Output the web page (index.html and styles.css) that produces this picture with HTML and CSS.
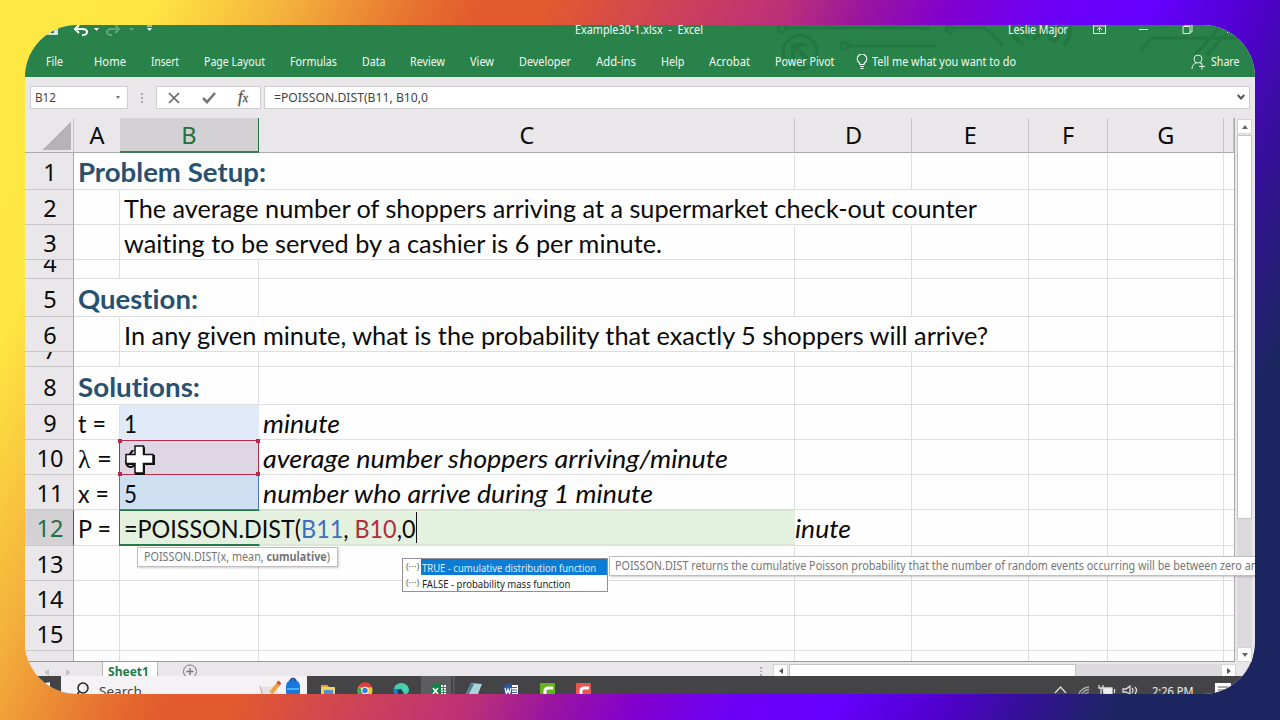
FILE: index.html
```html
<!DOCTYPE html>
<html lang="en">
<head>
<meta charset="utf-8">
<title>Example30-1.xlsx - Excel</title>
<link rel="stylesheet" href="styles.css">
</head>
<body>
<main class="window">
  <header class="ribbon">
    <svg class="circuit" width="480" height="52" viewBox="0 0 480 52" fill="none" stroke="#1f6d3b" stroke-width="2.5">
      <circle cx="7" cy="3" r="4"/><path d="M11 3H140L155 4M172 3h38l18 17M70 21h92"/>
      <circle cx="25" cy="27" r="17" stroke-width="3"/><path d="M32 34 19 21M18 33V20h14" stroke-width="4"/>
      <circle cx="70" cy="21" r="4"/><circle cx="175" cy="4" r="4"/>
      <path d="M238 0q-3 14 11 19M248 0q-2 9 7 13M258 15 270 5l8 12M284 0q4 8-5 17M294 0q4 10-5 20" stroke-width="4"/>
      <path d="M367 25 376 13H470M420 30 447 0M432 30 459 0" stroke-width="3"/>
    </svg>
    <div class="titlebar">
      <svg class="quick" width="120" height="14" viewBox="0 0 120 14" fill="none" stroke="#fff" stroke-width="1.6">
        <path d="M14 0v9h10V0M16 2h7M17 9V5h5v4"/><path d="M42 4h7q5 0 5 3t-5 3M46 0l-4 4 4 4" stroke-width="2"/><path d="m61 3 2.500 3L66 3z" fill="#fff" stroke="none"/>
        <g opacity=".28"><path d="M86 4h-7q-5 0-5 3t5 3M82 0l4 4-4 4" stroke-width="2"/><path d="m96 3 2.500 3L101 3z" fill="#fff" stroke="none"/></g>
        <path d="M114 1h5" stroke-width="1"/><path d="m114 3 2.500 3 2.500-3z" fill="#fff" stroke="none"/>
      </svg>
      <span class="doc" data-w="128">Example30-1.xlsx&nbsp; -&nbsp; Excel</span>
      <span class="user" data-w="60">Leslie Major</span>
      <svg class="winctl" width="145" height="14" viewBox="0 0 145 14" fill="none" stroke="#e4f1e8">
        <path d="M.5 0v8.500h12V0M.5 1h12M6.500 7V2.500M4 5l2.500-2.500L9 5M46 4.500h9M90 1.500h7v7h-7zM92 1.500V0h7v7h-2M134 8l9-9"/>
      </svg>
    </div>
    <nav class="tabs">
      <span class="file" data-w="17">File</span><span data-w="32">Home</span><span data-w="28">Insert</span><span data-w="61">Page Layout</span><span data-w="47">Formulas</span><span data-w="23.500">Data</span><span data-w="35">Review</span><span data-w="24">View</span><span data-w="52">Developer</span><span data-w="40">Add-ins</span><span data-w="23.500">Help</span><span data-w="41">Acrobat</span><span data-w="59.500">Power Pivot</span>
      <svg class="bulb" width="12" height="16" viewBox="0 0 12 16" fill="none" stroke="#fff" stroke-width="1.200"><path d="M4 10.500Q4 9 2.500 8A4.700 4.700 0 1 1 9.500 8Q8 9 8 10.500zM4 12.500h4M4.500 14.500h3"/></svg>
      <span class="tell" data-w="144">Tell me what you want to do</span>
      <span class="share"><svg width="15" height="16" viewBox="0 0 15 16" fill="none" stroke="#e4f1e8"><circle cx="7" cy="5" r="4"/><path d="M1 15q0-5 4.500-6M9 9l2 1M8 12.500h6M11 9.500v6"/></svg><span data-w="28.500">Share</span></span>
    </nav>
  </header>

  <section class="formula">
    <div class="namebox"><span data-w="21">B12</span><i class="caret"></i></div>
    <div class="dots"><i></i><i></i><i></i></div>
    <div class="fxbox">
      <svg width="12" height="12" viewBox="0 0 12 12" fill="none" stroke="#666" stroke-width="1.700"><path d="m1 1 10 10M11 1 1 11"/></svg>
      <svg width="14" height="12" viewBox="0 0 14 12" fill="none" stroke="#777" stroke-width="2.600"><path d="m1 6 4 4 8-9"/></svg>
      <span class="fx">f<small>x</small></span>
    </div>
    <div class="input"><span data-w="154">=POISSON.DIST(B11, B10,0</span><svg width="8" height="7" viewBox="0 0 8 7" fill="none" stroke="#555" stroke-width="2"><path d="m.7 1 3.300 3.500L7.300 1"/></svg></div>
  </section>

  <section class="book">
    <div class="sheet">
      <div class="row head"><b class="corner"></b><b>A</b><b class="on">B</b><b>C</b><b>D</b><b>E</b><b>F</b><b>G</b><b></b></div>
      <div class="row h37"><b>1</b><p class="o title"><span data-w="188">Problem Setup:</span></p><p class="o"></p><p></p><p></p><p></p><p></p><p></p><p></p></div>
      <div class="row"><b>2</b><p></p><p class="o"><span data-w="853">The average number of shoppers arriving at a supermarket check-out counter</span></p><p class="o"></p><p class="o"></p><p></p><p></p><p></p><p></p></div>
      <div class="row"><b>3</b><p></p><p class="o"><span data-w="538">waiting to be served by a cashier is 6 per minute.</span></p><p></p><p></p><p></p><p></p><p></p><p></p></div>
      <div class="row h19"><b><em>4</em></b><p></p><p></p><p></p><p></p><p></p><p></p><p></p><p></p></div>
      <div class="row h38"><b>5</b><p class="o title"><span data-w="120">Question:</span></p><p></p><p></p><p></p><p></p><p></p><p></p><p></p></div>
      <div class="row"><b>6</b><p></p><p class="o"><span data-w="864">In any given minute, what is the probability that exactly 5 shoppers will arrive?</span></p><p class="o"></p><p class="o"></p><p></p><p></p><p></p><p></p></div>
      <div class="row h15"><b><em>7</em></b><p></p><p></p><p></p><p></p><p></p><p></p><p></p><p></p></div>
      <div class="row h38"><b>8</b><p class="o title"><span data-w="122">Solutions:</span></p><p></p><p></p><p></p><p></p><p></p><p></p><p></p></div>
      <div class="row"><b>9</b><p><span data-w="28">t =</span></p><p class="t"><span data-w="13">1</span></p><p class="i"><span data-w="77">minute</span></p><p></p><p></p><p></p><p></p><p></p></div>
      <div class="row"><b>10</b><p><span data-w="34"><span class="lambda">λ</span> =</span></p><p class="mean"><span data-w="13">6</span><i class="k tl"></i><i class="k tr"></i><i class="k bl"></i><i class="k br"></i></p><p class="i"><span data-w="465">average number shoppers arriving/minute</span></p><p></p><p></p><p></p><p></p><p></p></div>
      <div class="row"><b>11</b><p><span data-w="31">x =</span></p><p class="x"><span data-w="13">5</span></p><p class="i"><span data-w="390">number who arrive during 1 minute</span></p><p></p><p></p><p></p><p></p><p></p></div>
      <div class="row h36"><b class="on">12</b><p><span data-w="33">P =</span></p><p class="edit"><span data-w="291.500">=POISSON.DIST(<span class="blue">B11</span>, <span class="red">B10</span>,0</span><i class="ibeam"></i></p><p class="i rest"><span data-w="56">inute</span></p><p></p><p></p><p></p><p></p></div>
      <div class="row"><b>13</b><p></p><p></p><p></p><p></p><p></p><p></p><p></p><p></p></div>
      <div class="row"><b>14</b><p></p><p></p><p></p><p></p><p></p><p></p><p></p><p></p></div>
      <div class="row"><b>15</b><p></p><p></p><p></p><p></p><p></p><p></p><p></p><p></p></div>
      <div class="row h11"><b><em>16</em></b><p></p><p></p><p></p><p></p><p></p><p></p><p></p><p></p></div>
    </div>
    <div class="vscroll"><span class="btn"><i class="up"></i></span><span class="thumb"></span><span class="space"></span><span class="btn"><i class="down"></i></span></div>
  </section>

  <footer class="sheets">
    <span class="arrows"><i class="left"></i><i class="right"></i></span>
    <span class="tab"><span data-w="41">Sheet1</span></span>
    <svg class="plus" width="16" height="15" viewBox="0 0 16 15" fill="none" stroke="#777"><circle cx="8" cy="9.500" r="6.500"/><path d="M8 6v7M4.500 9.500h7" stroke-width="1.400"/></svg>
    <span class="dots2"><i></i><i></i><i></i></span>
    <span class="hbtn"><i class="left"></i></span><span class="hthumb"></span><span class="hspace"></span><span class="hbtn"><i class="right"></i></span>
  </footer>

  <footer class="taskbar">
    <svg class="start" width="36" height="18" viewBox="0 0 36 18"><path d="m12 8 5-.5V18h-5zM18 7.300l7-1V18h-7z" fill="#fff"/></svg>
    <div class="search">
      <svg width="14" height="18" viewBox="0 0 14 18" fill="none" stroke="#222" stroke-width="1.500"><circle cx="7" cy="12" r="5"/><path d="m3.500 15.500-4 5"/></svg>
      <span data-w="43">Search</span>
      <svg class="art" width="44" height="18" viewBox="0 0 44 18"><path d="m1 11 16-1 2 8H3z" fill="#e3e0df"/><path d="m1 10 2 8" stroke="#b9a9a0"/><path d="m12 17 8-10" stroke="#efa043" stroke-width="4"/><path d="m19 8 2-2" stroke="#d94b3e" stroke-width="4"/><rect x="27" y="4" width="14" height="18" rx="6" fill="#1977dd"/><path d="M31 5q3-5 6 0" fill="none" stroke="#164f9c" stroke-width="2"/><path d="M28 13h12" stroke="#44b5ff" stroke-width="2"/></svg>
    </div>
    <svg class="apps" width="290" height="18" viewBox="0 0 290 18">
      <path d="M14 9h6l2 2h6v7H14z" fill="#f6cf61"/><path d="M14 9h6l1 2h-7z" fill="#e5a52b"/><path d="M17 14h9v4h-9z" fill="#4d91c9"/>
      <circle cx="58" cy="14.500" r="7.500" fill="#f0c52e"/><path d="M51 11a7.500 7.500 0 0 1 14 0l-7 1z" fill="#dc4037"/><path d="M51 11q-1 4 1 7h5l-3-5z" fill="#35a653"/><circle cx="58" cy="14.500" r="3.700" fill="#fff"/><circle cx="58" cy="14.500" r="2.700" fill="#327ddd"/>
      <circle cx="94" cy="14.500" r="7.500" fill="#1684c7"/><path d="M87 13q1-6 8-6 7 1 7 8-1 3-5 3-1-6-10-5" fill="#46cfad"/><path d="M91 18q-2-5 3-5l3 5z" fill="#253d50"/>
      <path d="M114 0h30v18h-30zM146 0h1.500v18H146z" fill="#5d5d5f"/><path d="m124 9 10-2v11h-10z" fill="#168047"/><path d="M134 9h5v9h-5z" fill="#fff"/><path d="M134 11.500h5M134 14h5M134 16.500h5M136.500 9v9" stroke="#2c8a50"/><path d="m126 12 5 6M131 12l-5 6" stroke="#fff" stroke-width="1.500"/>
      <path d="m164 7 11 1-4 10h-12z" fill="#a8d2dc"/><path d="m164 7 3 1-5 10h-3z" fill="#4f7f8a"/>
      <path d="m197 9 8-2v11h-8z" fill="#2456a3"/><path d="M205 9h6v9h-6z" fill="#fff"/><path d="M205 11.500h5M205 14h5M205 16.500h5" stroke="#3b65aa"/><path d="m198 12 1.500 6 1.500-5 1.500 5 1.500-6" fill="none" stroke="#fff" stroke-width="1.200"/>
      <rect x="233" y="7" width="15" height="15" rx="1" fill="#64b516"/><path d="M238 18v-3q0-3 3-3h5" fill="none" stroke="#fff" stroke-width="3"/>
      <rect x="269" y="7" width="15" height="15" rx="1" fill="#e9574f"/><path d="M274 18v-3q0-3 3-3h5" fill="none" stroke="#fff" stroke-width="3"/>
    </svg>
    <svg class="tray" width="90" height="18" viewBox="0 0 90 18" fill="none" stroke="#ddd" stroke-width="1.300"><path d="m5 17 5.500-6 5.500 6"/><path d="M29 18q2-6 10-7M32 18q2-4 7-4.500M35 18q1-1 4-2" stroke="#aaa"/><path d="M53 12h9v6h-8z" fill="#eee"/><path d="M49 9v3h4V9M51 12v6M64.500 13v4"/><path d="M73 13h3l4-3v8l-4-2h-3zM82 12q2 2 0 5M85 11q3 3 0 7"/></svg>
    <span class="clock" data-w="41.500">2:26 PM</span>
    <svg class="note" width="16" height="12" viewBox="0 0 16 12"><path d="M0 0h16v12H0z" fill="#fff"/><path d="M3 4h10M3 7h10M3 10h7" stroke="#555"/></svg>
  </footer>

  <div class="hint"><span data-w="186">POISSON.DIST(x, mean, <strong>cumulative</strong>)</span></div>
  <div class="list">
    <div><small>(···)</small><span class="pick"><span data-w="174">TRUE - cumulative distribution function</span></span></div>
    <div><small>(···)</small><span class="opt"><span data-w="148.500">FALSE - probability mass function</span></span></div>
  </div>
  <div class="desc"><span data-w="649">POISSON.DIST returns the cumulative Poisson probability that the number of random events occurring will be between zero and</span></div>
  <svg class="cursor" width="33" height="33" viewBox="0 0 33 33"><path d="M11 3h10v8h10v10H21v10H11V21H3V11h8z" fill="#111"/><path d="M11 2h8.500v8.500H29v9h-9.500V29H11v-9.500H2v-9h9z" fill="#fff" stroke="#111" stroke-width="1.500"/></svg>
</main>
<script src="fit.js"></script>
</body>
</html>
```
FILE: styles.css
```css
* { box-sizing: border-box; }
body {
  margin: 0; width: 1280px; height: 720px; padding: 25px; overflow: hidden;
  font: 12px "Noto Sans", "Open Sans", sans-serif; color: #111;
  background: linear-gradient(114.200deg, #ffe944 0, #ffe642 140px, #f4b13c 265px, #e6702f 385px, #e35a2e 440px, #e35a2e 500px, #cf4356 610px, #bb3079 720px, #9a159f 790px, #8100cf 870px, #6c00f5 960px, #6600ff 1050px, #5000cc 1150px, #36109a 1220px, #1b2660 1310px);
}
p { margin: 0; }
[data-w] { display: inline-block; white-space: pre; transform-origin: 0 50%; font-variant-ligatures: none; }
.window { position: relative; width: 1230px; height: 669px; border-radius: 52px; overflow: hidden; display: flex; flex-direction: column; background: #e9e7e9; }

.ribbon { position: relative; height: 51.500px; background: #28824a; color: #f2faf4; flex: none; }
.circuit { position: absolute; left: 750px; top: 0; opacity: .5; }
.titlebar { position: relative; display: flex; height: 22px; line-height: 10px; overflow: hidden; }
.quick { margin-left: 8px; overflow: visible; }
.doc { margin-left: 422px; }
.user { margin-left: 305px; }
.winctl { margin-left: 25px; }
.tabs { position: relative; display: flex; gap: 24.900px; height: 29px; line-height: 29px; padding: 0 16px 0 20.500px; }
.tabs > .file + span { margin-left: 7px; }
.bulb { margin: 7px -21px 0 -3.500px; }
.share { margin-left: auto; display: flex; gap: 5px; }
.share svg { margin-top: 7px; }

.formula { height: 41.500px; flex: none; display: flex; padding: 9.500px 5px 9px; color: #444; }
.formula > div { background: #fff; border: 1px solid #cfcdcf; height: 23px; display: flex; align-items: center; }
.namebox { width: 98px; padding: 0 7px 0 4px; justify-content: space-between; }
.caret { border: 2.500px solid transparent; border-top: 3px solid #777; border-bottom: 0; }
.formula .dots { border: 0; background: none; width: 28px; flex-direction: column; justify-content: center; gap: 2px; }
.dots i, .dots2 i { width: 2px; height: 2px; background: #aaa; }
.fxbox { width: 105px; margin-right: 3px; padding: 0 12px 0 11px; justify-content: space-between; }
.fx { font: italic 17px/20px "Liberation Serif", serif; color: #555; -webkit-text-stroke: .3px #555; }
.fx small { font-size: 12px; }
.input { flex: 1; padding: 0 4px 0 9px; justify-content: space-between; }

.book { height: 544px; flex: none; display: flex; }
.sheet { width: 1210px; background: #fefefe; border-right: 1px solid #aaa; border-bottom: 1px solid #999; overflow: hidden; font: 25px/36px Lato, sans-serif; }
.row { display: grid; grid-template-rows: 100%; grid-template-columns: 49px 46px 139px 536px 117px 116.500px 79px 116.500px 1fr; height: 35px; line-height: 36px; color: #0a0a0a; }
.row p, .row b { border-bottom: 1px solid #dedede; border-right: 1px solid #dedede; min-width: 0; min-height: 0; white-space: nowrap; }
.row p { padding-left: 4px; }
.row p:last-child { border-right: 0; }
.row p.o { border-right-color: transparent; }
.row b { font: 23.500px/36px "Noto Sans", sans-serif; background: #e9e7e9; border-color: #c8c6c8; border-right-color: #aaa8aa; text-align: center; overflow: hidden; padding-left: 2px; }
.row b em { display: block; font-style: normal; }
.row.head b { border-right-color: #c5c3c5; border-bottom-color: #aaa8aa; line-height: 35px; padding-left: 1px; }
.row b.on { background: #d3d1d3; color: #256f43; border-right-color: #207245; }
.row.head b.on { padding: 0; border-bottom: 2px solid #3d7d58; }
.row.head b:nth-child(2) { border-right: 0; padding: 0; }
.row.head b.corner { background: linear-gradient(to bottom right, transparent 50%, #b5b3b5 50.500%) 17px 3px / 29px 29px no-repeat, #e9e7e9; }
.h37 { height: 37px; line-height: 39px; }
.h38 { height: 38px; line-height: 40px; }
.row.h37 b { line-height: 39px; }
.row.h38 b { line-height: 41px; }
.h36 { height: 36px; }
.h19 { height: 19px; }
.h19 em { margin-top: -15px; }
.h15 { height: 15px; }
.h15 em { margin-top: -20px; }
.h11 { height: 11px; }
.title { font-size: 26.500px; font-weight: 700; color: #28506f; }
.h38 .title { line-height: 41px; }
.i { font-style: italic; }
.lambda { font-family: "Liberation Serif", serif; font-size: 25px; }
.row p.t { background: #e0eaf8; border-color: #e0eaf8; }
.row p.mean { position: relative; background: #ded6e4; border: 1.500px solid #b52b4b; margin: 0 0 0 -1px; line-height: 34px; }
.k { position: absolute; width: 4px; height: 4px; background: #b52b4b; }
.tl { left: -2px; top: -2px; } .tr { right: -2px; top: -2px; } .bl { left: -2px; bottom: -2px; } .br { right: -2px; bottom: -2px; }
.row p.x { background: #cfdff2; border: 1px solid #4a76c4; border-top: 0; margin: 0 0 0 -1px; padding-left: 4px; }
.row p.edit { grid-column: 3 / 5; background: #e4f1de; margin-left: -1px; border-right: 0; border-left: 1.500px solid #277a48; border-top: 1px solid #277a48; border-bottom-width: 2px; border-image: linear-gradient(90deg, #277a48 20.700%, #dbe6d6 20.800%) 1; display: flex; padding-left: 4px; line-height: 35px; }
.ibeam { width: 1px; height: 31px; background: #111; margin-top: 1px; }
.row p.rest { padding-left: 0; }
.blue { color: #3d6fc1; }
.red { color: #b22d40; }

.vscroll { width: 18px; padding: 1px 1px 0 2px; display: flex; flex-direction: column; background: #e9e7e9; }
.btn { height: 15px; flex: none; background: #fff; border: 1px solid #d5d3d5; display: grid; place-items: center; }
.thumb { height: 384px; margin-top: 1px; background: #fff; border: 1px solid #c4c2c4; }
.space { flex: 1; background: #dcdadc; }
.up { border: 3.500px solid transparent; border-top: 0; border-bottom: 4px solid #666; }
.down { border: 3.500px solid transparent; border-bottom: 0; border-top: 4px solid #666; }
.left { border: 3.500px solid transparent; border-left: 0; border-right: 4px solid #555; }
.right { border: 3.500px solid transparent; border-right: 0; border-left: 4px solid #555; }

.sheets { height: 14px; flex: none; display: flex; }
.arrows { width: 77px; padding: 7px 0 0 20px; display: flex; gap: 17px; }
.arrows i { opacity: .25; height: 7px; }
.tab { width: 56px; background: #fff; border: 1px solid #b7b5b7; border-width: 0 1px; color: #217a46; font-weight: 700; line-height: 20px; padding-left: 5px; overflow: hidden; }
.plus { margin-left: 24px; }
.dots2 { width: 3px; margin: 5px 10px 0 562px; display: flex; flex-direction: column; gap: 2px; }
.hbtn { width: 15px; background: #fff; margin-top: 2px; border: 1px solid #d5d3d5; border-bottom: 0; display: grid; place-items: center; }
.hthumb { width: 287px; background: #fff; margin: 2px 0 0 1px; border: 1px solid #c4c2c4; border-bottom: 0; }
.hspace { width: 145px; background: #dcdadc; margin-top: 2px; }

.taskbar { height: 18px; flex: none; background: #444345; display: flex; overflow: hidden; }
.search { width: 246px; background: #f4f2f4; display: flex; padding-left: 15px; font-size: 13px; line-height: 31px; color: #444; }
.search svg:first-child { margin-right: 9px; }
.search .art { margin-left: auto; margin-right: 4px; }
.apps { flex: none; }
.tray { margin-right: 12px; margin-left: 453px; flex: none; }
.clock { color: #eee; line-height: 31px; font-size: 12px; flex: none; }
.note { margin: 7px 0 0 21px; flex: none; }

.hint, .desc { position: absolute; background: #fff; border: 1px solid #bfbdbf; color: #757575; line-height: 17px; box-shadow: 1px 1px 2px #0003; white-space: nowrap; }
.hint { left: 112px; top: 522px; width: 201px; height: 20px; padding-left: 6px; }
.desc { left: 584px; top: 531px; width: 680px; height: 20px; padding-left: 5px; }
.list { position: absolute; left: 377px; top: 533px; width: 206px; height: 34px; background: #fff; border: 1px solid #929096; font-size: 11px; line-height: 17px; }
.list > div { display: flex; height: 16px; }
.list small { width: 18px; padding-left: 3px; font-size: 9.500px; color: #666; line-height: 15px; white-space: nowrap; }
.pick, .opt { flex: 1; padding-left: 1px; }
.pick { background: #0c7bd3; color: #d9efff; }
.opt { color: #222; }
.cursor { position: absolute; left: 99px; top: 419px; }
```
FILE: fit.js
```js
document.querySelectorAll('[data-w]').forEach(function (el) {
  var want = parseFloat(el.dataset.w);
  var have = el.getBoundingClientRect().width;
  el.style.transform = 'scaleX(' + want / have + ')';
  el.style.marginRight = (want - have) + 'px';
  el.style.flex = 'none';
});
```
